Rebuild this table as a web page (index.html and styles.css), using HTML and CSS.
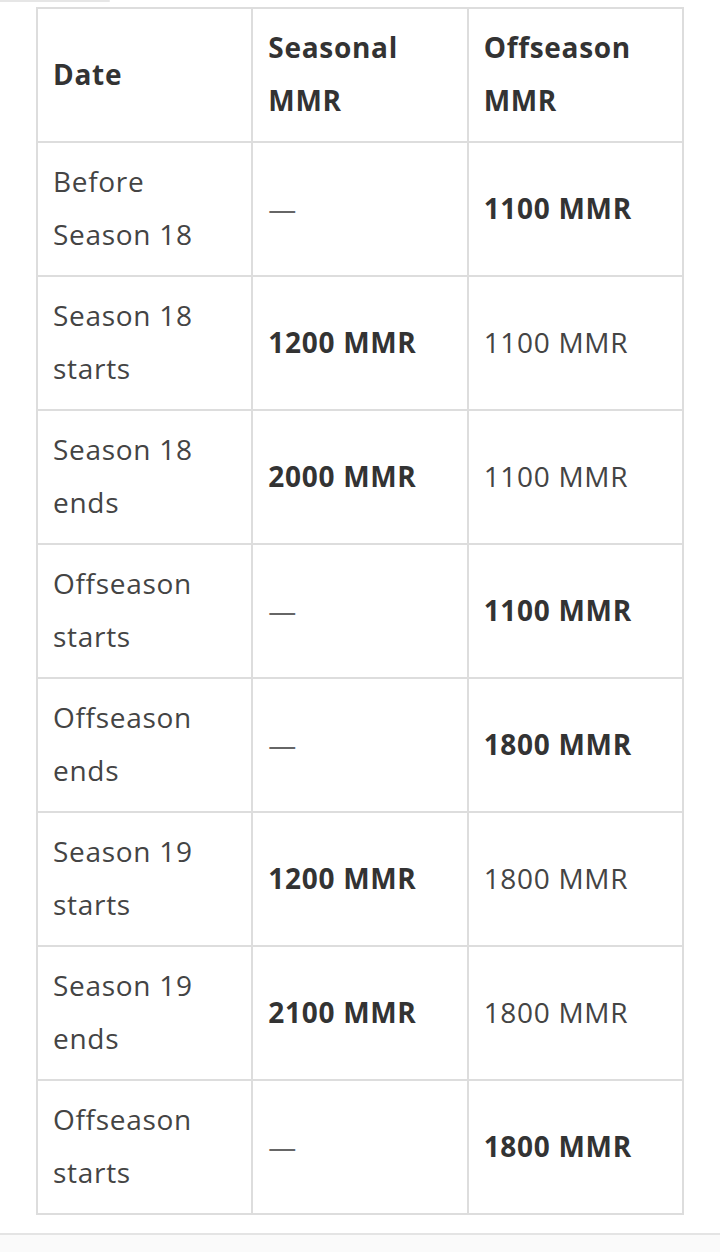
FILE: index.html
```html
<!DOCTYPE html>
<html>
<head>
<meta charset="utf-8">
<link rel="stylesheet" href="styles.css">
</head>
<body>
<div class="page">
  <div class="topbar"></div>
  <div class="wrap">
    <table class="mmr">
      <colgroup><col class="c"><col class="c"><col class="c"></colgroup>
      <thead>
        <tr><th>Date</th><th>Seasonal MMR</th><th>Offseason MMR</th></tr>
      </thead>
      <tbody>
        <tr><td>Before Season 18</td><td class="dash">—</td><td><b>1100 MMR</b></td></tr>
        <tr><td>Season 18 starts</td><td><b>1200 MMR</b></td><td>1100 MMR</td></tr>
        <tr><td>Season 18 ends</td><td><b>2000 MMR</b></td><td>1100 MMR</td></tr>
        <tr><td>Offseason starts</td><td class="dash">—</td><td><b>1100 MMR</b></td></tr>
        <tr><td>Offseason ends</td><td class="dash">—</td><td><b>1800 MMR</b></td></tr>
        <tr><td>Season 19 starts</td><td><b>1200 MMR</b></td><td>1800 MMR</td></tr>
        <tr><td>Season 19 ends</td><td><b>2100 MMR</b></td><td>1800 MMR</td></tr>
        <tr><td>Offseason starts</td><td class="dash">—</td><td><b>1800 MMR</b></td></tr>
      </tbody>
    </table>
  </div>
  <div class="footer"></div>
</div>
</body>
</html>
```

FILE: styles.css
```css
html, body {
  margin: 0;
  padding: 0;
  background: #ffffff;
}
.page {
  width: 720px;
  height: 1252px;
  display: flex;
  flex-direction: column;
  font-family: "Open Sans", "Noto Sans", sans-serif;
}
.topbar {
  width: 110px;
  height: 2px;
  background: #e6e6e6;
  border-radius: 0 2px 2px 0;
}
.wrap {
  padding: 5px 0 0 36px;
}
.mmr {
  border-collapse: collapse;
  table-layout: fixed;
  width: 648px;
  color: #444;
  font-size: 28px;
  letter-spacing: 0.7px;
  line-height: 53px;
}
.mmr .c {
  width: 33.333%;
}
.mmr th, .mmr td {
  border: 2px solid #dddddd;
  padding: 12px 14px 14px 15px;
  text-align: left;
  vertical-align: middle;
}
.mmr th {
  font-weight: 700;
  color: #333;
}
.mmr tbody tr {
  height: 134px;
}
.mmr thead tr {
  height: 133px;
}
.mmr b {
  font-weight: 700;
  color: #333;
}
.dash {
  color: #666;
}
.footer {
  margin-top: 18px;
  flex: 1;
  border-top: 2px solid #e4e4e4;
  background: #fafafa;
}
```
